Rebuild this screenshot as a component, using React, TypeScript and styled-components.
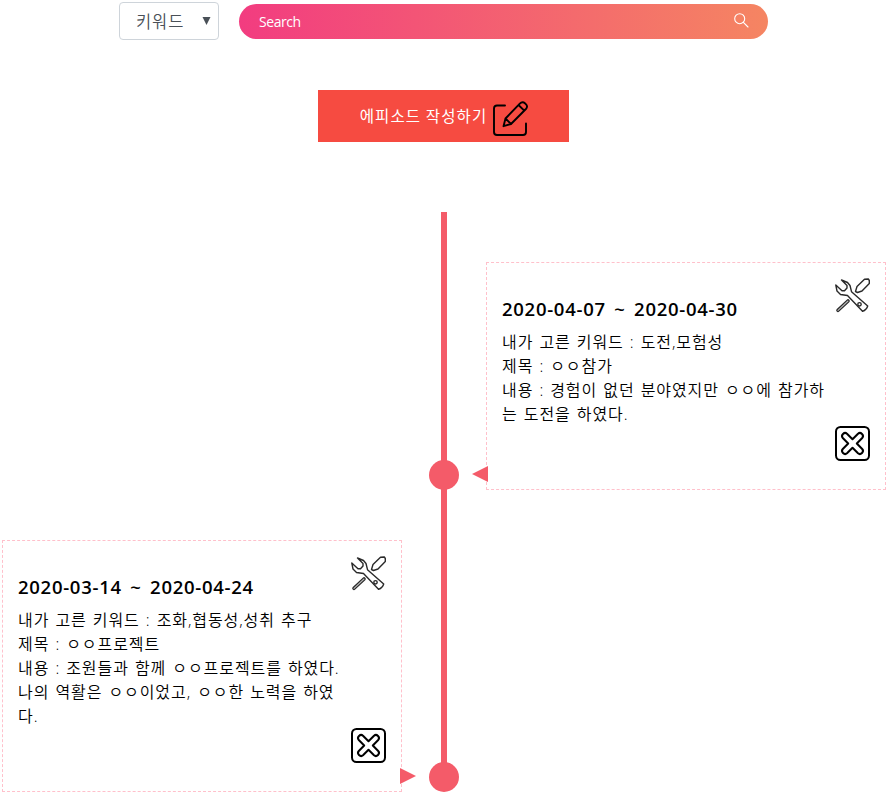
import React from "react";
import styled, { createGlobalStyle } from "styled-components";

const GlobalStyle = createGlobalStyle`
  * { box-sizing: border-box; }
  body {
    margin: 0;
    background: #fff;
    color: #000;
    font-family: "Open Sans", "Noto Sans CJK KR", sans-serif;
    overflow: hidden;
  }
`;

const Page = styled.main`
  width: 888px;
  height: 794px;
`;

const Toolbar = styled.header`
  display: flex;
  gap: 20px;
  height: 40px;
  padding: 2px 0 0 119px;
`;

const KeywordSelect = styled.button`
  display: flex;
  align-items: center;
  justify-content: space-between;
  width: 100px;
  height: 38px;
  padding: 0 7px 0 16px;
  border: 1px solid #ced4da;
  border-radius: 4px;
  background: #fff;
  color: #495057;
  font: 350 16.5px/24px "Noto Sans CJK KR", sans-serif;
  letter-spacing: 0.9px;
`;

const Caret = styled.svg`
  width: 9px;
  height: 8px;
  fill: #495057;
`;

const SearchBar = styled.div`
  display: flex;
  align-items: center;
  justify-content: space-between;
  width: 529px;
  height: 35px;
  margin-top: 2px;
  padding: 0 19px 0 20px;
  border-radius: 18px;
  background: linear-gradient(to right, #f23c80, #f58562);
  color: #fff;
  font-size: 14px;
  letter-spacing: -0.45px;
`;

const WriteButton = styled.button`
  display: flex;
  align-items: center;
  justify-content: center;
  gap: 6px;
  width: 251px;
  height: 52px;
  margin: 50px 0 70px 318px;
  padding: 4px 0 0 1px;
  border: 0;
  background: #f64b41;
  color: #fff;
`;

const WriteLabel = styled.span`
  margin-top: -6px;
  font: 400 15.5px/24px "Noto Sans CJK KR", sans-serif;
  letter-spacing: 1.12px;
  white-space: nowrap;
`;

const Icon = styled.svg`
  display: block;
  flex: none;
  width: 35px;
  height: 35px;
  fill: none;
  stroke: #000;
  stroke-linejoin: round;
  stroke-linecap: round;
`;

const SearchSvg = styled(Icon)`
  width: 16px;
  height: 16px;
  stroke: #fff;
  margin-top: -3px;
`;

const ToolsSvg = styled(Icon)`
  stroke: #2a2a2a;
`;

const Timeline = styled.ol`
  margin: 0;
  padding: 0;
  list-style: none;
`;

const Row = styled.li`
  display: grid;
  grid-template-columns: 400px 30px 400px;
  column-gap: 27px;
  padding: 0 2px;
`;

const Axis = styled.div`
  grid-column: 2;
  grid-row: 1;
  display: flex;
  flex-direction: column;
  align-items: center;

  li + li > & {
    margin-top: -2px;
  }
`;

const Line = styled.div`
  width: 6px;
  flex: 1;
  margin-bottom: -2px;
  background: #f45b69;
`;

const Dot = styled.div`
  width: 30px;
  height: 30px;
  border-radius: 50%;
  background: #f45b69;
`;

const Card = styled.article<{ $side: "left" | "right" }>`
  position: relative;
  grid-column: ${(p) => (p.$side === "left" ? 1 : 3)};
  grid-row: 1;
  display: flex;
  justify-content: space-between;
  margin-top: 50px;
  padding: 15px 15px 28px;
  border: 1px dashed #ffc0cb;

  &::after {
    content: "";
    position: absolute;
    bottom: 7px;
    ${(p) => (p.$side === "left" ? "right: -15px;" : "left: -15px;")}
    border: solid transparent;
    border-width: 8px 0;
    ${(p) =>
      p.$side === "left"
        ? "border-left: 16px solid #f45b69;"
        : "border-right: 16px solid #f45b69;"}
  }
`;

const CardText = styled.div`
  padding: 19px 0 35px;
`;

const Period = styled.h2`
  margin: 0 0 9px;
  font: 600 18.5px/24px "Open Sans", sans-serif;
  letter-spacing: 0.72px;
  word-spacing: 3px;
  white-space: nowrap;
`;

const TextLine = styled.p`
  margin: 0;
  font: 350 16px/24px "Open Sans", "Noto Sans CJK KR", sans-serif;
  letter-spacing: 0.93px;
  word-spacing: 1px;
  white-space: nowrap;
`;

const Actions = styled.div`
  display: flex;
  flex-direction: column;
  justify-content: space-between;
`;

const SearchIcon = () => (
  <SearchSvg viewBox="0 0 16 16" strokeWidth="1.1">
    <circle cx="6.7" cy="6.7" r="5" />
    <path d="M10.4 10.4L15 15" />
  </SearchSvg>
);

const PencilIcon = () => (
  <Icon viewBox="0 0 35 35" strokeWidth="1.9">
    <path d="M12 4.5H4Q1 4.5 1 7.5V31Q1 34 4 34H30Q33 34 33 31V22.5" />
    <path d="M12.5 17.5L26.8 2.7Q29.3 0 32.2 2.4Q35.5 5.2 32.9 8L18 23L10.5 25.2ZM25.5 4L31.3 9.6M12.5 17.5L18 23" />
  </Icon>
);

const ToolsIcon = () => (
  <ToolsSvg viewBox="0 0 35 35" strokeWidth="1.4">
    <path d="M0.8 7L2 13L5.500 16.500L12.500 17.500L27.500 33.300Q31.500 32 32.700 28L16.500 13.700L15 7.500L12.500 4.500L6.500 2L12 7.500L12 10L9.500 12.800L7 12.800Z" />
    <circle cx="24.5" cy="26.3" r="1.7" />
    <path d="M20.5 13.5L22 8.5L29.5 1.3L33.3 1L34.3 2.5V5.5L27 13L22.5 14.5Z" />
    <path d="M13 23L3 32.3" strokeWidth="3.6" />
    <path d="M13 23L3 32.3" stroke="#b8b8b8" strokeWidth="1.1" />
  </ToolsSvg>
);

const CloseIcon = () => (
  <Icon viewBox="0 0 35 35" strokeWidth="2">
    <rect x="1" y="1" width="33" height="33" rx="4.5" />
    <path d="M17.5 13.2L23 7.7Q25 6 27 8Q29 10 27.2 12L21.8 17.5L27.2 23Q29 25 27 27Q25 29 23 27.3L17.5 21.8L12 27.3Q10 29 8 27Q6 25 7.8 23L13.2 17.5L7.8 12Q6 10 8 8Q10 6 12 7.7Z" />
  </Icon>
);

type Episode = {
  side: "left" | "right";
  period: string;
  lines: string[];
};

const episodes: Episode[] = [
  {
    side: "right",
    period: "2020-04-07 ~ 2020-04-30",
    lines: [
      "내가 고른 키워드 : 도전,모험성",
      "제목 : ㅇㅇ참가",
      "내용 : 경험이 없던 분야였지만 ㅇㅇ에 참가하",
      "는 도전을 하였다.",
    ],
  },
  {
    side: "left",
    period: "2020-03-14 ~ 2020-04-24",
    lines: [
      "내가 고른 키워드 : 조화,협동성,성취 추구",
      "제목 : ㅇㅇ프로젝트",
      "내용 : 조원들과 함께 ㅇㅇ프로젝트를 하였다.",
      "나의 역활은 ㅇㅇ이었고, ㅇㅇ한 노력을 하였",
      "다.",
    ],
  },
];

export default function App() {
  return (
    <Page>
      <GlobalStyle />
      <Toolbar>
        <KeywordSelect>
          키워드
          <Caret viewBox="0 0 9 8">
            <path d="M0.5 0H8.5L4.5 8Z" />
          </Caret>
        </KeywordSelect>
        <SearchBar>
          <span>Search</span>
          <SearchIcon />
        </SearchBar>
      </Toolbar>
      <WriteButton>
        <WriteLabel>에피소드 작성하기</WriteLabel>
        <PencilIcon />
      </WriteButton>
      <Timeline>
        {episodes.map((e) => (
          <Row key={e.period}>
            <Axis>
              <Line />
              <Dot />
            </Axis>
            <Card $side={e.side}>
              <CardText>
                <Period>{e.period}</Period>
                {e.lines.map((line) => (
                  <TextLine key={line}>{line}</TextLine>
                ))}
              </CardText>
              <Actions>
                <ToolsIcon />
                <CloseIcon />
              </Actions>
            </Card>
          </Row>
        ))}
      </Timeline>
    </Page>
  );
}
